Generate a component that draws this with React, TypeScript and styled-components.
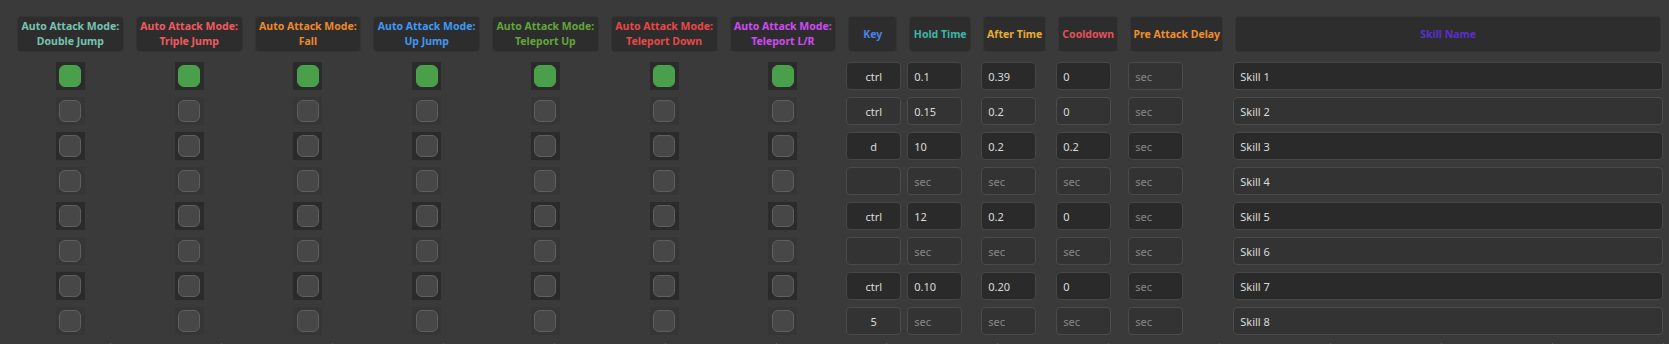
import React from "react";
import styled, { createGlobalStyle } from "styled-components";

const Global = createGlobalStyle`
  html, body { margin: 0; padding: 0; background: #3a3a3a; overflow: hidden; }
  body { font-family: "Noto Sans", "Open Sans", sans-serif; }
`;

const COLS = "repeat(7, 118.75px) 61px 74px 75px 72px 105px 1fr";

const Page = styled.div`
  width: 1669px;
  height: 344px;
  box-sizing: border-box;
  padding: 16px 2px 0 11px;
  display: flex;
  flex-direction: column;
  background: #3a3a3a;
  overflow: hidden;
`;

const Grid = styled.div`
  display: grid;
  grid-template-columns: ${COLS};
  align-items: center;
`;

const HeaderRow = styled(Grid)`
  height: 36px;
  margin-bottom: 10px;
  flex-shrink: 0;
`;

const Rows = styled.div`
  display: flex;
  flex-direction: column;
  gap: 7px;
  flex-shrink: 0;
`;

const DataRow = styled(Grid)`
  height: 28px;
`;

const HeadBox = styled.div<{ $color: string }>`
  margin: 0 6px;
  height: 36px;
  box-sizing: border-box;
  background: #2d2d2d;
  border: 1px solid #343434;
  border-radius: 4px;
  display: flex;
  flex-direction: column;
  align-items: center;
  justify-content: center;
  color: ${(p) => p.$color};
  font-family: "Noto Sans", sans-serif;
  font-weight: 700;
  font-size: 10.5px;
  line-height: 15px;
  white-space: nowrap;
`;

const CheckCell = styled.div<{ $dark: boolean }>`
  justify-self: center;
  width: 29px;
  height: 28px;
  display: flex;
  align-items: center;
  justify-content: center;
  background: ${(p) => (p.$dark ? "#2b2b2b" : "#363636")};
`;

const Check = styled.span<{ $on: boolean }>`
  width: 22px;
  height: 22px;
  box-sizing: border-box;
  border-radius: 6px;
  background: ${(p) => (p.$on ? "#4a9f4b" : "#474747")};
  border: 1px solid ${(p) => (p.$on ? "#4da24e" : "#5f5f5f")};
`;

const Field = styled.input<{ $dark: boolean; $center?: boolean }>`
  box-sizing: border-box;
  height: 28px;
  width: 55px;
  margin: 0 0 0 4px;
  padding: 0 6px;
  border: 1px solid ${(p) => (p.$dark ? "#474747" : "#4b4b4b")};
  border-radius: 4px;
  background: ${(p) => (p.$dark ? "#2a2a2a" : "#333333")};
  color: #dcdcdc;
  font-family: "Noto Sans", sans-serif;
  font-size: 11px;
  text-align: ${(p) => (p.$center ? "center" : "left")};
  outline: none;
  &::placeholder {
    color: #888888;
  }
`;

const WideField = styled(Field)`
  width: calc(100% - 8px);
  margin: 0 4px;
`;

const Footer = styled.div`
  margin-top: 8px;
  margin-left: -11px;
  width: 1664px;
  height: 20px;
  flex-shrink: 0;
  display: grid;
  grid-template-columns: repeat(15, 1fr);
`;

const FootCell = styled.div`
  border-right: 1px solid #5a5a5a;
`;

const modes = [
  { name: "Double Jump", color: "#76c4b2" },
  { name: "Triple Jump", color: "#f25b5e" },
  { name: "Fall", color: "#ec8a2a" },
  { name: "Up Jump", color: "#4099f3" },
  { name: "Teleport Up", color: "#61a63c" },
  { name: "Teleport Down", color: "#e84848" },
  { name: "Teleport L/R", color: "#cf4bf2" },
];

const fieldHeads = [
  { name: "Key", color: "#4a82ea" },
  { name: "Hold Time", color: "#3db6a6" },
  { name: "After Time", color: "#e8ae32" },
  { name: "Cooldown", color: "#e2525c" },
  { name: "Pre Attack Delay", color: "#f08f2c" },
  { name: "Skill Name", color: "#5b2fcf" },
];

type Row = {
  on: boolean;
  key: string;
  hold: string;
  after: string;
  cool: string;
  pre: string;
  skill: string;
  preLight?: boolean;
};

const rows: Row[] = [
  { on: true, key: "ctrl", hold: "0.1", after: "0.39", cool: "0", pre: "", skill: "Skill 1", preLight: true },
  { on: false, key: "ctrl", hold: "0.15", after: "0.2", cool: "0", pre: "", skill: "Skill 2" },
  { on: false, key: "d", hold: "10", after: "0.2", cool: "0.2", pre: "", skill: "Skill 3" },
  { on: false, key: "", hold: "", after: "", cool: "", pre: "", skill: "Skill 4" },
  { on: false, key: "ctrl", hold: "12", after: "0.2", cool: "0", pre: "", skill: "Skill 5" },
  { on: false, key: "", hold: "", after: "", cool: "", pre: "", skill: "Skill 6" },
  { on: false, key: "ctrl", hold: "0.10", after: "0.20", cool: "0", pre: "", skill: "Skill 7" },
  { on: false, key: "5", hold: "", after: "", cool: "", pre: "", skill: "Skill 8" },
];

export default function App() {
  return (
    <Page>
      <Global />
      <HeaderRow>
        {modes.map((m) => (
          <HeadBox key={m.name} $color={m.color}>
            <span>Auto Attack Mode:</span>
            <span>{m.name}</span>
          </HeadBox>
        ))}
        {fieldHeads.map((h) => (
          <HeadBox key={h.name} $color={h.color}>
            {h.name}
          </HeadBox>
        ))}
      </HeaderRow>
      <Rows>
        {rows.map((r, i) => {
          const dark = i % 2 === 0;
          return (
            <DataRow key={i}>
              {modes.map((m) => (
                <CheckCell key={m.name} $dark={dark}>
                  <Check $on={r.on} />
                </CheckCell>
              ))}
              <Field $dark={dark} $center readOnly value={r.key} />
              <Field $dark={dark} readOnly value={r.hold} placeholder="sec" />
              <Field $dark={dark} readOnly value={r.after} placeholder="sec" />
              <Field $dark={dark} readOnly value={r.cool} placeholder="sec" />
              <Field $dark={dark && !r.preLight} readOnly value={r.pre} placeholder="sec" />
              <WideField $dark={dark} readOnly value={r.skill} />
            </DataRow>
          );
        })}
      </Rows>
      <Footer>
        {Array.from({ length: 15 }).map((_, i) => (
          <FootCell key={i} />
        ))}
      </Footer>
    </Page>
  );
}
